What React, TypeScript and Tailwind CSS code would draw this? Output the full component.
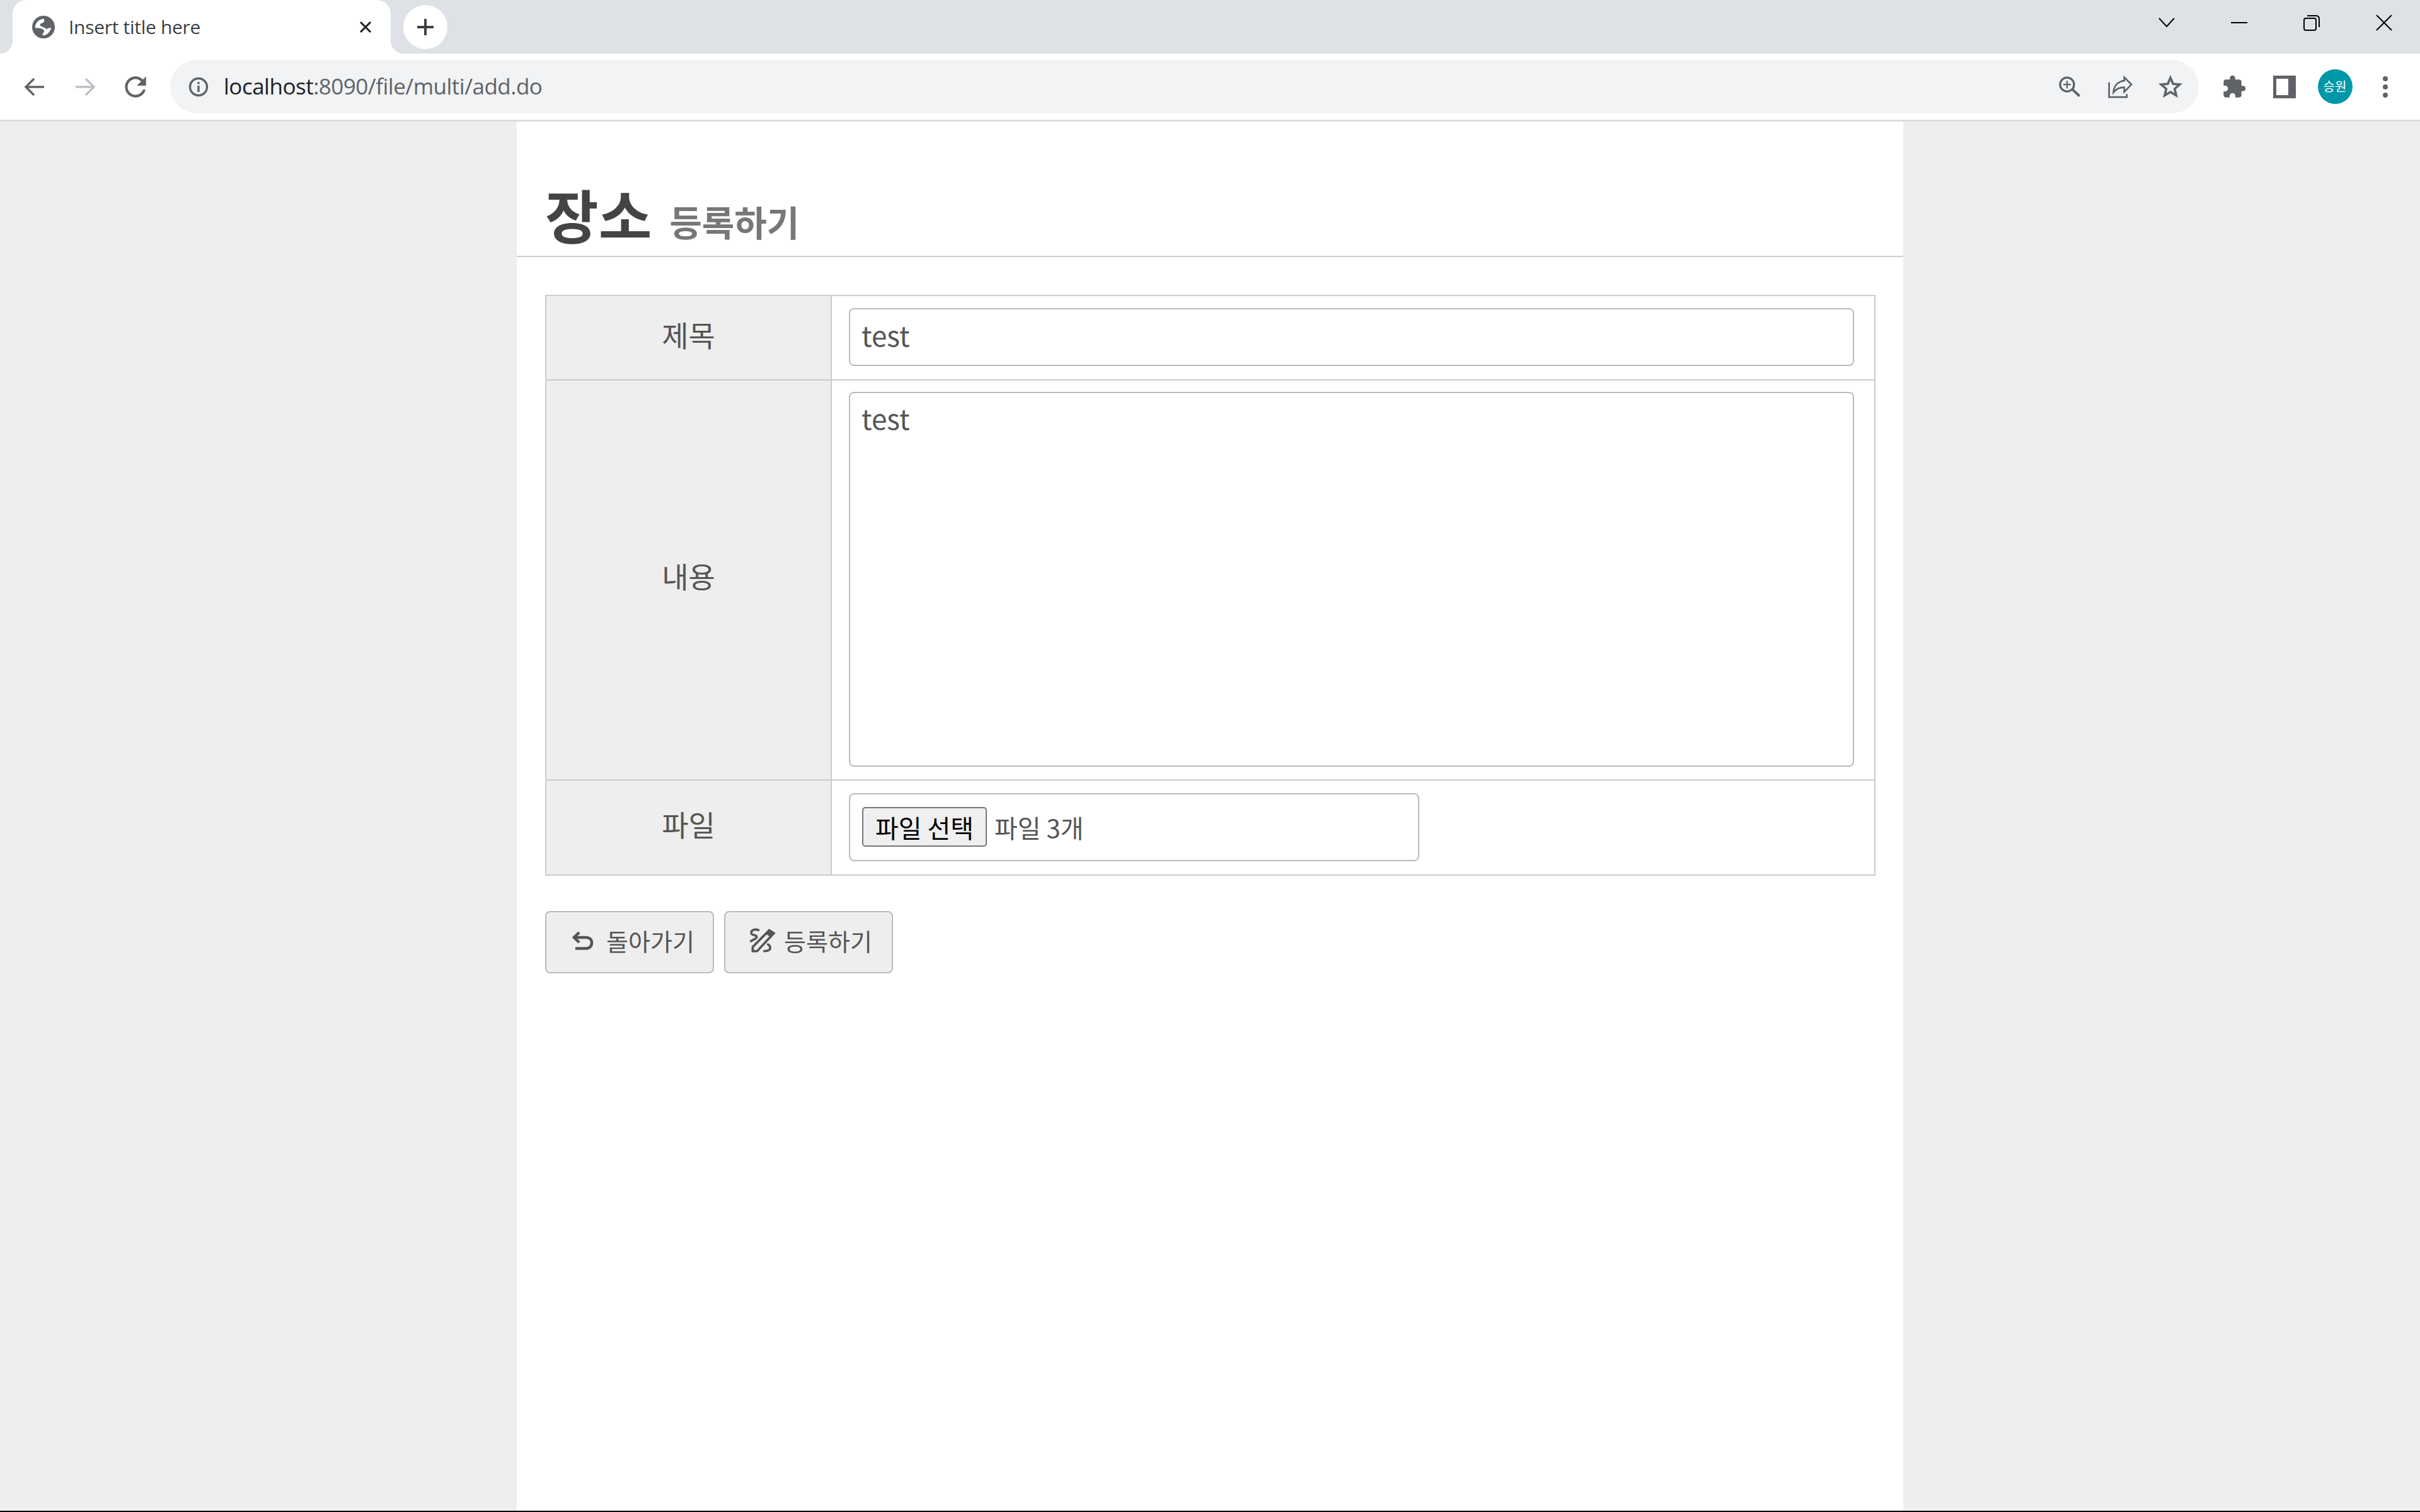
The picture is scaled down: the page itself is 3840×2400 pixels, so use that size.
const uiFont = "[font-family:'Open_Sans','Noto_Sans_CJK_KR',sans-serif]";

const Globe = () => (
  <svg viewBox="34 14 108 108" className="w-[36px] h-[36px]">
    <circle cx="88" cy="68" r="54" fill="#5f6368" />
    <path
      fill="#fff"
      d="M48 70C48 48 66 30 90 28L92 40C88 50 70 48 72 60C76 68 95 68 102 78C110 72 118 72 125 70C122 88 108 104 88 108C82 108 82 100 90 92C95 84 85 78 75 74C65 72 55 74 48 70Z"
    />
  </svg>
);

const Arrow = ({ color, flip }: { color: string; flip?: boolean }) => (
  <svg viewBox="0 0 36 36" className={flip ? "w-[36px] h-[36px] rotate-180" : "w-[36px] h-[36px]"} fill="none" stroke={color} strokeWidth="3.4">
    <path d="M33 18H5M17 5L4 18l13 13" />
  </svg>
);

const Reload = () => (
  <svg viewBox="0 0 24 24" className="w-[50px] h-[50px]" fill="#5f6368">
    <path d="M17.65 6.35A7.958 7.958 0 0012 4c-4.42 0-7.99 3.58-7.99 8s3.57 8 7.99 8c3.73 0 6.84-2.55 7.73-6h-2.08A5.99 5.99 0 0112 18c-3.31 0-6-2.69-6-6s2.69-6 6-6c1.66 0 3.14.69 4.22 1.78L13 11h7V4l-2.35 2.35z" />
  </svg>
);

const Info = () => (
  <svg viewBox="0 0 32 32" className="w-[32px] h-[32px]" fill="none" stroke="#5f6368" strokeWidth="3.4">
    <circle cx="16" cy="16" r="13.5" />
    <path d="M16 14v10M16 8v3.4" />
  </svg>
);

const ZoomIn = () => (
  <svg viewBox="50 60 108 104" className="w-[36px] h-[35px]" fill="none" stroke="#5f6368" strokeWidth="10">
    <circle cx="92" cy="102" r="33" />
    <path d="M92 84v36M74 102h36" strokeWidth="7" />
    <path d="M118 126l33 31" strokeWidth="12" />
  </svg>
);

const Share = () => (
  <svg viewBox="290 60 118 108" className="w-[39px] h-[36px]" fill="none" stroke="#5f6368" strokeWidth="8">
    <path d="M295 92V163H380V148" />
    <path d="M368 68L402 102L368 138V116C345 116 330 122 316 140C318 110 335 88 368 84Z" />
  </svg>
);

const Star = () => (
  <svg viewBox="0 0 24 24" className="w-[44px] h-[44px]" fill="#5f6368" stroke="#5f6368" strokeWidth="0.4">
    <path d="M22 9.24l-7.19-.62L12 2 9.19 8.63 2 9.24l5.46 4.73L5.82 21 12 17.27 18.18 21l-1.63-7.03L22 9.24zM12 15.4l-3.76 2.27 1-4.28-3.32-2.88 4.38-.38L12 6.1l1.71 4.04 4.38.38-3.32 2.88 1 4.28L12 15.4z" />
  </svg>
);

const Puzzle = () => (
  <svg viewBox="0 0 24 24" className="w-[40px] h-[40px]" fill="#5f6368">
    <path d="M20.5 11H19V7c0-1.1-.9-2-2-2h-4V3.5C13 2.12 11.88 1 10.5 1S8 2.12 8 3.5V5H4c-1.1 0-1.99.9-1.99 2v3.8H3.5c1.49 0 2.7 1.21 2.7 2.7s-1.21 2.7-2.7 2.7H2V20c0 1.1.9 2 2 2h3.8v-1.5c0-1.49 1.21-2.7 2.7-2.7 1.49 0 2.7 1.21 2.7 2.7V22H17c1.1 0 2-.9 2-2v-4h1.5c1.38 0 2.5-1.12 2.5-2.5S21.88 11 20.5 11z" />
  </svg>
);

const SidePanel = () => (
  <svg viewBox="0 0 36 36" className="w-[36px] h-[36px]">
    <rect x="0" y="0" width="36" height="36" fill="#5f6368" />
    <rect x="5" y="5" width="19" height="26" fill="#fff" />
  </svg>
);

const Undo = () => (
  <svg viewBox="0 0 34 32" className="w-[34px] h-[32px]" fill="none" stroke="#555" strokeWidth="4.5">
    <path d="M11 3L3 11l8 8" />
    <path d="M3 11h19c5 0 9 3 9 8.500S27 28.500 22 28.500H5" />
  </svg>
);

const PenSquiggle = () => (
  <svg viewBox="52 36 132 124" className="w-[44px] h-[41px]" fill="none" stroke="#555" strokeWidth="11">
    <path d="M71 150V130L150 50L172 64L92 150Z" />
    <path d="M150 44L178 62L160 84L130 66Z" fill="#555" stroke="none" />
    <path d="M66 155V132L84 155Z" fill="#555" stroke="none" />
    <path d="M98 49C80 42 62 50 64 64C66 76 90 70 90 82C90 90 74 94 62 102" strokeLinecap="round" />
    <path d="M144 118C156 124 158 138 150 144C144 148 134 150 126 150" strokeLinecap="round" />
  </svg>
);

const App = () => {
  return (
    <div className={`flex flex-col w-[3840px] h-[2400px] overflow-hidden ${uiFont}`}>
      {/* tab strip */}
      <div className="flex h-[85px] bg-[#dee1e6] shrink-0 pl-[20px]">
        <div className="relative flex items-center w-[600px] bg-white rounded-t-[22px] pl-[31px] pr-[30px]">
          {/* flared corners */}
          <div className="absolute bottom-0 -left-[20px] w-[20px] h-[20px] bg-white">
            <div className="w-full h-full rounded-br-[20px] bg-[#dee1e6]" />
          </div>
          <div className="absolute bottom-0 -right-[20px] w-[20px] h-[20px] bg-white">
            <div className="w-full h-full rounded-bl-[20px] bg-[#dee1e6]" />
          </div>
          <Globe />
          <span className="ml-[22px] text-[30px] tracking-[-0.3px] text-[#3c4043]">Insert title here</span>
          <svg viewBox="0 0 20 20" className="ml-auto w-[20px] h-[20px]" fill="none" stroke="#202124" strokeWidth="3">
            <path d="M2 2l16 16M18 2L2 18" />
          </svg>
        </div>
        <div className="flex items-center justify-center w-[70px] h-[70px] mt-[8px] ml-[20px] rounded-full bg-white">
          <svg viewBox="0 0 28 28" className="w-[28px] h-[28px]" fill="none" stroke="#3c4043" strokeWidth="4">
            <path d="M14 1v26M1 14h26" />
          </svg>
        </div>
        <div className="ml-auto flex h-[72px]">
          <div className="flex items-center justify-center w-[115px]">
            <svg viewBox="0 0 26 16" className="w-[26px] h-[16px]" fill="none" stroke="#000" strokeWidth="2"><path d="M1 1l12 13L25 1" /></svg>
          </div>
          <div className="flex items-center justify-center w-[115px]">
            <svg viewBox="0 0 26 4" className="w-[26px] h-[4px]" fill="none" stroke="#000" strokeWidth="2"><path d="M0 2h26" /></svg>
          </div>
          <div className="flex items-center justify-center w-[115px]">
            <svg viewBox="0 0 26 26" className="w-[26px] h-[26px]" fill="none" stroke="#000" strokeWidth="2">
              <rect x="1" y="6" width="19" height="19" rx="3" />
              <path d="M6 2h14c3 0 5 2 5 5v13" />
            </svg>
          </div>
          <div className="flex items-center justify-center w-[115px]">
            <svg viewBox="0 0 26 26" className="w-[26px] h-[26px]" fill="none" stroke="#000" strokeWidth="2"><path d="M1 1l24 24M25 1L1 25" /></svg>
          </div>
        </div>
      </div>

      {/* toolbar */}
      <div className="flex items-center h-[108px] shrink-0 bg-white border-b-[3px] border-[#dadce0] pl-[15px] pr-[15px]">
        <div className="flex items-center justify-center w-[80px]"><Arrow color="#5f6368" /></div>
        <div className="flex items-center justify-center w-[80px]"><Arrow color="#bdc1c6" flip /></div>
        <div className="flex items-center justify-center w-[80px]"><Reload /></div>
        <div className="flex items-center flex-1 h-[85px] ml-[15px] pl-[29px] pr-[5px] rounded-full bg-[#f1f3f4]">
          <Info />
          <span className="ml-[24px] text-[35px] tracking-[-0.5px] text-[#202124]">
            localhost<span className="text-[#5f6368]">:8090/file/multi/add.do</span>
          </span>
          <div className="ml-auto flex items-center justify-center w-[80px]"><ZoomIn /></div>
          <div className="flex items-center justify-center w-[80px]"><Share /></div>
          <div className="flex items-center justify-center w-[80px]"><Star /></div>
        </div>
        <div className="flex items-center justify-center w-[80px] ml-[16px]"><Puzzle /></div>
        <div className="flex items-center justify-center w-[80px]"><SidePanel /></div>
        <div className="flex items-center justify-center w-[80px]">
          <div className="flex items-center justify-center w-[55px] h-[55px] rounded-full bg-[#0097a7] text-white text-[20px]">승원</div>
        </div>
        <div className="flex flex-col items-center gap-[5px] w-[80px]">
          <div className="w-[8px] h-[8px] rounded-full bg-[#5f6368]" />
          <div className="w-[8px] h-[8px] rounded-full bg-[#5f6368]" />
          <div className="w-[8px] h-[8px] rounded-full bg-[#5f6368]" />
        </div>
      </div>

      {/* page */}
      <div className="flex justify-center flex-1 bg-[#eee] font-['Noto_Sans_CJK_KR',sans-serif]">
        <div className="w-[2200px] bg-white">
          <div className="flex items-end h-[215px] pl-[45px] pb-[12px] border-b-2 border-[#ccc]">
            <h1 className="text-[92px] leading-[110px] font-bold text-[#444]">장소</h1>
            <span className="ml-[28px] text-[56px] leading-[86px] font-semibold text-[#777]">등록하기</span>
          </div>

          <div className="px-[45px] pt-[60px]">
            <table className="w-[2111px] table-fixed border-collapse text-[44px] text-[#555]">
              <colgroup>
                <col className="w-[453px]" />
                <col />
              </colgroup>
              <tbody>
                <tr className="h-[134px]">
                  <th className="border-2 border-[#ccc] bg-[#eee] text-[46px] font-normal pb-[12px]">제목</th>
                  <td className="border-2 border-[#ccc] pl-[27px] pr-[32px]">
                    <input
                      readOnly
                      value="test"
                      className="block w-full h-[92px] -mt-[2px] px-[18px] pb-[8px] border-2 border-[#bbb] rounded-[8px] text-[#555] outline-none"
                    />
                  </td>
                </tr>
                <tr className="h-[635px]">
                  <th className="border-2 border-[#ccc] bg-[#eee] text-[46px] font-normal pb-[14px]">내용</th>
                  <td className="border-2 border-[#ccc] pl-[27px] pr-[32px]">
                    <textarea
                      readOnly
                      value="test"
                      className="block w-full h-[595px] -mt-[2px] px-[18px] pt-[6px] border-2 border-[#bbb] rounded-[8px] text-[#555] resize-none outline-none"
                    />
                  </td>
                </tr>
                <tr className="h-[151px]">
                  <th className="border-2 border-[#ccc] bg-[#eee] text-[46px] font-normal pb-[12px]">파일</th>
                  <td className="border-2 border-[#ccc] pl-[27px] pr-[32px]">
                    <div className="flex items-center w-[905px] h-[108px] -mt-[2px] pl-[19px] border-2 border-[#bbb] rounded-[8px]">
                      <button className="w-[198px] h-[63px] border-2 border-[#767676] rounded-[5px] bg-[#efefef] text-[40px] leading-none text-black">파일 선택</button>
                      <span className="ml-[12px] text-[40px]">파일 3개</span>
                    </div>
                  </td>
                </tr>
              </tbody>
            </table>

            <div className="flex gap-[16px] mt-[56px]">
              <button className="flex items-center gap-[20px] w-[268px] h-[99px] pl-[41px] pb-[6px] border-2 border-[#bbb] rounded-[8px] bg-[#eee] text-[38px] text-[#555]">
                <Undo />
                돌아가기
              </button>
              <button className="flex items-center gap-[12px] w-[268px] h-[99px] pl-[37px] pb-[6px] border-2 border-[#bbb] rounded-[8px] bg-[#eee] text-[38px] text-[#555]">
                <PenSquiggle />
                등록하기
              </button>
            </div>
          </div>
        </div>
      </div>
      <div className="h-[2px] shrink-0 bg-black" />
    </div>
  );
};

export default App;
